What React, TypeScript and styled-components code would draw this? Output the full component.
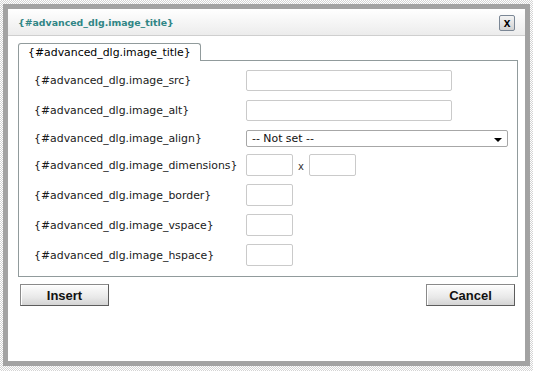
import React from "react";
import styled, { createGlobalStyle } from "styled-components";

const GlobalStyle = createGlobalStyle`
  html, body {
    margin: 0;
    padding: 0;
  }
  body {
    width: 533px;
    height: 371px;
    overflow: hidden;
    background-color: #fff;
    background-image: repeating-conic-gradient(#d4d4d4 0 25%, #fff 0 50%);
    background-size: 2px 2px;
    font-family: "DejaVu Sans", Verdana, sans-serif;
  }
`;

const Window = styled.div`
  box-sizing: border-box;
  width: 527px;
  height: 362px;
  margin: 4px 0 0 3px;
  border: 5px solid #a2a2a2;
  background: #fff;
  display: flex;
  flex-direction: column;
`;

const TitleBar = styled.div`
  box-sizing: border-box;
  height: 27px;
  display: flex;
  align-items: center;
  justify-content: space-between;
  padding: 0 10px 0 10px;
  background: linear-gradient(#ffffff, #ececec);
  border-bottom: 1px solid #cfcfcf;
`;

const Title = styled.span`
  font-family: "DejaVu Sans", Verdana, sans-serif;
  font-weight: bold;
  font-size: 9.4px;
  color: #2f8585;
`;

const CloseButton = styled.button`
  box-sizing: border-box;
  width: 16px;
  height: 16px;
  padding: 0;
  margin-top: 1px;
  border: 1px solid #7b8795;
  border-radius: 2px;
  background: linear-gradient(#f4f4f4, #d2d2d2);
  font-family: "Liberation Sans", Arial, sans-serif;
  font-weight: bold;
  font-size: 12px;
  line-height: 12px;
  color: #000;
`;

const Body = styled.div`
  padding: 7px 8px 0 10px;
`;

const Tabs = styled.div`
  display: flex;
`;

const Tab = styled.div`
  box-sizing: border-box;
  height: 18px;
  padding: 0 9px;
  border: 1px solid #919b9c;
  border-bottom: none;
  border-radius: 3px 3px 0 0;
  background: #fff;
  font-size: 10.9px;
  line-height: 17px;
  color: #000;
  margin-bottom: -1px;
  position: relative;
  z-index: 1;
`;

const Panel = styled.div`
  box-sizing: border-box;
  width: 500px;
  height: 217px;
  border: 1px solid #919b9c;
  padding: 9px 0 0 15px;
`;

const Row = styled.div<{ $h: number; $gap: number }>`
  display: grid;
  grid-template-columns: 212px 1fr;
  align-items: center;
  height: ${(p) => p.$h}px;
  margin-bottom: ${(p) => p.$gap}px;
`;

const Label = styled.label`
  font-size: 10.9px;
  color: #1a1a1a;
  white-space: nowrap;
`;

const Field = styled.div`
  display: flex;
  align-items: center;
`;

const TextInput = styled.input<{ $w: number; $h: number }>`
  box-sizing: border-box;
  width: ${(p) => p.$w}px;
  height: ${(p) => p.$h}px;
  margin: 0;
  border: 1px solid #cacaca;
  border-radius: 2px;
  background: #fff;
  outline: none;
`;

const Select = styled.div`
  box-sizing: border-box;
  width: 262px;
  height: 17px;
  border: 1px solid #a7a7a7;
  border-radius: 2px;
  display: flex;
  align-items: center;
  justify-content: space-between;
  padding: 0 5px 0 5px;
  font-size: 10.9px;
  color: #111;
`;

const Arrow = styled.span`
  width: 0;
  height: 0;
  margin-top: 3px;
  border-left: 4px solid transparent;
  border-right: 4px solid transparent;
  border-top: 4px solid #000;
`;

const Times = styled.span`
  width: 16px;
  text-align: center;
  font-size: 10px;
  color: #333;
  padding-top: 3px;
`;

const Footer = styled.div`
  width: 500px;
  display: flex;
  justify-content: space-between;
  padding: 7px 3px 0 2px;
  box-sizing: border-box;
`;

const Button = styled.button`
  box-sizing: border-box;
  width: 89px;
  height: 22px;
  padding: 0;
  border: 1px solid #8a8a8a;
  border-right-color: #5c5c5c;
  border-bottom-color: #5c5c5c;
  background: linear-gradient(#fdfdfd, #e9e9e9 60%, #d4d4d4);
  box-shadow: inset 1px 1px 0 #fff;
  font-family: "Liberation Sans", Arial, sans-serif;
  font-weight: bold;
  font-size: 13px;
  color: #111;
`;

type Kind = "text" | "select" | "dims" | "small";

const rows: { label: string; h: number; gap: number; kind: Kind }[] = [
  { label: "{#advanced_dlg.image_src}", h: 21, gap: 9, kind: "text" },
  { label: "{#advanced_dlg.image_alt}", h: 21, gap: 9, kind: "text" },
  { label: "{#advanced_dlg.image_align}", h: 17, gap: 7, kind: "select" },
  { label: "{#advanced_dlg.image_dimensions}", h: 22, gap: 8, kind: "dims" },
  { label: "{#advanced_dlg.image_border}", h: 22, gap: 8, kind: "small" },
  { label: "{#advanced_dlg.image_vspace}", h: 22, gap: 8, kind: "small" },
  { label: "{#advanced_dlg.image_hspace}", h: 22, gap: 0, kind: "small" },
];

const App = () => {
  return (
    <>
      <GlobalStyle />
      <Window>
        <TitleBar>
          <Title>{"{#advanced_dlg.image_title}"}</Title>
          <CloseButton>x</CloseButton>
        </TitleBar>
        <Body>
          <Tabs>
            <Tab>{"{#advanced_dlg.image_title}"}</Tab>
          </Tabs>
          <Panel>
            {rows.map((r) => (
              <Row key={r.label} $h={r.h} $gap={r.gap}>
                <Label>{r.label}</Label>
                <Field>
                  {r.kind === "text" && <TextInput $w={206} $h={r.h} />}
                  {r.kind === "select" && (
                    <Select>
                      <span>-- Not set --</span>
                      <Arrow />
                    </Select>
                  )}
                  {r.kind === "dims" && (
                    <>
                      <TextInput $w={47} $h={r.h} />
                      <Times>x</Times>
                      <TextInput $w={47} $h={r.h} />
                    </>
                  )}
                  {r.kind === "small" && <TextInput $w={47} $h={r.h} />}
                </Field>
              </Row>
            ))}
          </Panel>
          <Footer>
            <Button>Insert</Button>
            <Button>Cancel</Button>
          </Footer>
        </Body>
      </Window>
    </>
  );
};

export default App;
